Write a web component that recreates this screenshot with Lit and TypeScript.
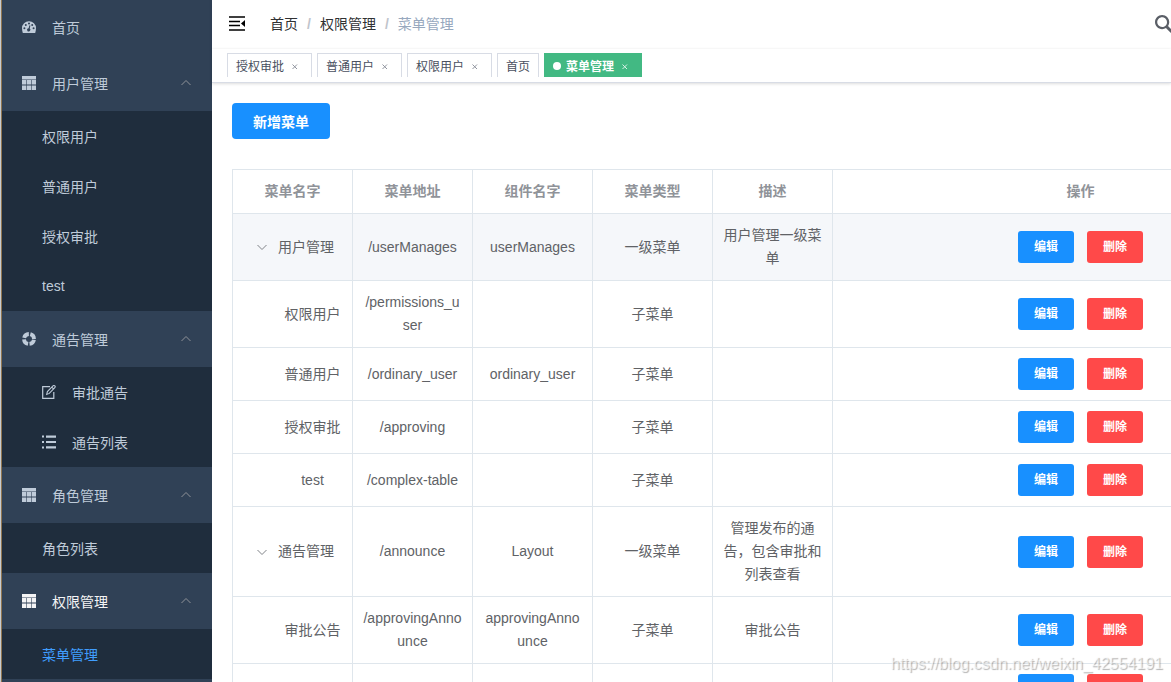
import { LitElement, html, css, svg, nothing } from "lit";
import { customElement, property } from "lit/decorators.js";

interface MenuItem {
  label: string;
  icon?: string;
  current?: boolean;
  children?: MenuItem[];
}

interface MenuRow {
  name: string;
  path?: string;
  component?: string;
  type?: string;
  desc?: string;
  child?: boolean;
  hover?: boolean;
}

const icons: Record<string, unknown> = {
  dashboard: svg`<path fill-rule="evenodd" d="M7 1.3a7 7 0 0 0-7 7c0 1.5.3 3 .8 4.700h12.400c.5-1.700.8-3.200.8-4.700a7 7 0 0 0-7-7zM2.4 7.3a1 1 0 1 1 0 2 1 1 0 0 1 0-2zM3.8 3.9a1 1 0 1 1 0 2 1 1 0 0 1 0-2zM7 2.4a1 1 0 1 1 0 2 1 1 0 0 1 0-2zM10.2 3.9a1 1 0 1 1 0 2 1 1 0 0 1 0-2zM11.6 7.3a1 1 0 1 1 0 2 1 1 0 0 1 0-2zM7.5 5.2l.9.3-.7 3a1.6 1.6 0 1 1-1.1-.3z"/>`,
  table: svg`<path d="M0 0h14v3.400H0zM0 4h4.400v4.600H0zM5 4h4v4.600H5zM9.600 4H14v4.600H9.600zM0 9.400h4.400V14H0zM5 9.400h4V14H5zM9.600 9.400H14V14H9.600z"/>`,
  component: svg`<circle cx="7" cy="7" r="5" fill="none" stroke="currentColor" stroke-width="3.8" stroke-dasharray="6.3 1.554" stroke-dashoffset="-.777"/>`,
  edit: svg`<path d="M8 1.700H.7v11.600h11.100V7" fill="none" stroke="currentColor" stroke-width="1.200"/><path d="M4.700 9.400l.7-2.900L11 .9c.5-.5 1.300-.4 1.800 0 .5.5.5 1.200 0 1.700L7.300 8.400zM9.800 2.200l1.700 1.700" fill="none" stroke="currentColor" stroke-width="1.100"/>`,
  list: svg`<path d="M0 .5h2v2H0zM4 .5h10v2.200H4zM0 6h2v2H0zM4 5.900h10v2.200H4zM0 11.500h2v2H0zM4 11.300h10v2.200H4z"/>`,
};

const menu: MenuItem[] = [
  { label: "首页", icon: "dashboard" },
  {
    label: "用户管理",
    icon: "table",
    children: [{ label: "权限用户" }, { label: "普通用户" }, { label: "授权审批" }, { label: "test" }],
  },
  {
    label: "通告管理",
    icon: "component",
    children: [{ label: "审批通告", icon: "edit" }, { label: "通告列表", icon: "list" }],
  },
  { label: "角色管理", icon: "table", children: [{ label: "角色列表" }] },
  { label: "权限管理", icon: "table", current: true, children: [{ label: "菜单管理", current: true }] },
];

const rows: MenuRow[] = [
  { name: "用户管理", path: "/userManages", component: "userManages", type: "一级菜单", desc: "用户管理一级菜单", hover: true },
  { name: "权限用户", path: "/permissions_user", type: "子菜单", child: true },
  { name: "普通用户", path: "/ordinary_user", component: "ordinary_user", type: "子菜单", child: true },
  { name: "授权审批", path: "/approving", type: "子菜单", child: true },
  { name: "test", path: "/complex-table", type: "子菜单", child: true },
  { name: "通告管理", path: "/announce", component: "Layout", type: "一级菜单", desc: "管理发布的通告，包含审批和列表查看" },
  { name: "审批公告", path: "/approvingAnnounce", component: "approvingAnnounce", type: "子菜单", desc: "审批公告", child: true },
  { name: "", child: true },
];

@customElement("side-menu")
export class SideMenu extends LitElement {
  static styles = css`
    :host {
      display: block;
      flex: none;
      width: 210px;
      background: #304156;
      overflow: hidden;
    }
    .menu {
      margin-top: -1px;
      font-size: 14px;
    }
    .item {
      display: flex;
      align-items: center;
      height: 56px;
      padding: 0 20px;
      box-sizing: border-box;
      color: #bfcbd9;
      text-decoration: none;
    }
    .label {
      flex: 1;
    }
    .icon {
      width: 14px;
      height: 14px;
      margin-right: 16px;
      fill: currentColor;
    }
    .arrow {
      width: 12px;
      height: 12px;
      fill: none;
      stroke: #909399;
    }
    .group.current {
      color: #f4f4f5;
    }
    .sub {
      background: #1f2d3d;
    }
    .sub .item {
      height: 50px;
      padding-left: 40px;
    }
    .sub .current {
      color: #409eff;
    }
  `;

  private link(item: MenuItem) {
    return html`<a
      class="item ${item.children ? "group" : ""} ${item.current ? "current" : ""}"
      href="#"
    >
      ${item.icon
        ? html`<svg class="icon" viewBox="0 0 14 14" aria-hidden="true">${icons[item.icon]}</svg>`
        : nothing}
      <span class="label">${item.label}</span>
      ${item.children
        ? html`<svg class="arrow" viewBox="0 0 12 12" aria-hidden="true"><path d="M1.500 8L6 3.500 10.500 8" /></svg>`
        : nothing}
    </a>`;
  }

  render() {
    return html`<nav class="menu">
      ${menu.map(
        (item) => html`${this.link(item)}
        ${item.children ? html`<div class="sub">${item.children.map((c) => this.link(c))}</div>` : nothing}`
      )}
    </nav>`;
  }
}

@customElement("nav-bar")
export class NavBar extends LitElement {
  static styles = css`
    :host {
      display: flex;
      align-items: center;
      height: 49px;
      padding: 0 0 2px 15px;
      box-sizing: border-box;
      background: #fff;
      box-shadow: 0 1px 4px rgba(0, 21, 41, 0.08);
    }
    button {
      border: 0;
      padding: 0;
      background: none;
      display: flex;
    }
    .toggle {
      width: 20px;
      margin-right: 23px;
    }
    .crumbs {
      flex: 1;
      padding-bottom: 2px;
      font-size: 14px;
      color: #97a8be;
    }
    a {
      color: #303133;
      text-decoration: none;
    }
    .sep {
      margin: 0 9px;
      font-weight: 700;
      color: #c0c4cc;
    }
    .search {
      flex: none;
      color: #5a5e66;
    }
  `;

  render() {
    return html`
      <button class="toggle" aria-label="折叠菜单">
        <svg width="20" height="20" viewBox="0 0 20 20">
          <path d="M2 3h16M2 7.500h11M2 11.500h11M2 16h16" fill="none" stroke="#000" stroke-width="1.600" />
          <path d="M18 6v7L14 9.500z" />
        </svg>
      </button>
      <nav class="crumbs">
        <a href="#">首页</a><span class="sep">/</span><a href="#">权限管理</a><span class="sep">/</span><span>菜单管理</span>
      </nav>
      <button class="search" aria-label="搜索">
        <svg width="18" height="18" viewBox="0 0 128 128" fill="currentColor">
          <path d="M124.884 109.812L94.256 79.166c-.357-.357-.757-.629-1.129-.914a50.366 50.366 0 0 0 8.186-27.590C101.327 22.689 78.656 0 50.670 0 22.685 0 0 22.688 0 50.663c0 27.989 22.685 50.663 50.656 50.663 10.186 0 19.643-3.030 27.600-8.201.286.385.557.771.9 1.114l30.628 30.632a10.633 10.633 0 0 0 7.543 3.129c2.728 0 5.457-1.043 7.543-3.115 4.171-4.157 4.171-10.915.014-15.073M50.671 85.338C31.557 85.338 16 69.780 16 50.663c0-19.102 15.557-34.661 34.670-34.661 19.115 0 34.657 15.559 34.657 34.675 0 19.102-15.557 34.661-34.656 34.661" />
        </svg>
      </button>
    `;
  }
}

@customElement("tags-view")
export class TagsView extends LitElement {
  static styles = css`
    :host {
      display: flex;
      gap: 5px;
      height: 34px;
      padding: 4px 15px 0;
      box-sizing: border-box;
      background: #fff;
      border-bottom: 1px solid #d8dce5;
      box-shadow: 0 1px 3px 0 rgba(0, 0, 0, 0.12), 0 0 3px 0 rgba(0, 0, 0, 0.04);
    }
    .tag {
      display: flex;
      align-items: center;
      height: 24px;
      padding: 0 8px;
      box-sizing: border-box;
      border: 1px solid #d8dce5;
      border-bottom: 0;
      background: #fff;
      color: #495060;
      font-size: 12px;
      text-decoration: none;
    }
    .active {
      background: #42b983;
      border-color: #42b983;
      color: #fff;
      font-weight: 700;
    }
    .dot {
      width: 8px;
      height: 8px;
      margin-right: 5px;
      border-radius: 50%;
      background: #fff;
    }
    .close {
      width: 16px;
      height: 16px;
      margin-left: 3px;
      fill: none;
      stroke: currentColor;
      opacity: 0.6;
    }
    .active .close {
      opacity: 0.8;
    }
  `;

  private tag(label: string, closable = true, active = false) {
    return html`<a class="tag ${active ? "active" : ""}" href="#">
      ${active ? html`<span class="dot"></span>` : nothing}<span>${label}</span>
      ${closable
        ? html`<svg class="close" viewBox="0 0 16 16"><path d="M5.500 6.500l4.500 4.500M10 6.500l-4.500 4.500" /></svg>`
        : nothing}
    </a>`;
  }

  render() {
    return html`${this.tag("授权审批")}${this.tag("普通用户")}${this.tag("权限用户")}${this.tag("首页", false)}${this.tag("菜单管理", true, true)}`;
  }
}

@customElement("menu-table")
export class MenuTable extends LitElement {
  @property({ attribute: false }) rows: MenuRow[] = [];

  static styles = css`
    table {
      width: 100%;
      table-layout: fixed;
      border-collapse: separate;
      border-spacing: 0;
      border: solid #dfe6ec;
      border-width: 1px 0 0 1px;
      font-size: 14px;
      line-height: 23px;
      color: #606266;
    }
    .narrow {
      width: 120px;
    }
    th,
    td {
      padding: 10px;
      border: solid #dfe6ec;
      border-width: 0 1px 1px 0;
      text-align: center;
      word-break: break-all;
    }
    th {
      color: #909399;
      font-weight: 700;
    }
    .hover {
      background: #f5f7fa;
    }
    .name {
      display: flex;
      justify-content: center;
      align-items: center;
    }
    .child {
      padding-left: 40px;
      white-space: nowrap;
    }
    .expand {
      display: flex;
      justify-content: center;
      width: 22px;
      margin-right: 5px;
      padding: 0;
      border: 0;
      background: none;
    }
    .expand svg {
      width: 12px;
      height: 12px;
      fill: none;
      stroke: #808388;
    }
    .actions {
      display: flex;
      justify-content: center;
      gap: 13px;
    }
    .btn {
      width: 56px;
      height: 32px;
      padding: 1px 0 0;
      border: 0;
      border-radius: 3px;
      background: #1890ff;
      color: #fff;
      font: inherit;
      font-size: 12px;
      font-weight: 700;
    }
    .danger {
      background: #ff4949;
    }
  `;

  render() {
    return html`<table>
      <colgroup>
        <col class="narrow" /><col class="narrow" /><col class="narrow" /><col class="narrow" /><col class="narrow" /><col />
      </colgroup>
      <thead>
        <tr>
          ${["菜单名字", "菜单地址", "组件名字", "菜单类型", "描述", "操作"].map((h) => html`<th>${h}</th>`)}
        </tr>
      </thead>
      <tbody>
        ${this.rows.map(
          (r) => html`<tr class=${r.hover ? "hover" : ""}>
            <td>
              <div class="name ${r.child ? "child" : ""}">
                ${r.child
                  ? nothing
                  : html`<button class="expand" aria-label="收起">
                      <svg viewBox="0 0 12 12"><path d="M1.500 4L6 8.500 10.500 4" /></svg>
                    </button>`}
                <span>${r.name}</span>
              </div>
            </td>
            <td>${r.path}</td>
            <td>${r.component}</td>
            <td>${r.type}</td>
            <td>${r.desc}</td>
            <td>
              <div class="actions">
                <button class="btn">编辑</button>
                <button class="btn danger">删除</button>
              </div>
            </td>
          </tr>`
        )}
      </tbody>
    </table>`;
  }
}

@customElement("app-root")
export class AppRoot extends LitElement {
  static styles = css`
    :host {
      display: flex;
      position: relative;
      height: 100vh;
      overflow: hidden;
      background: #fff;
      font-family: "Liberation Sans", "Noto Sans CJK SC", sans-serif;
    }
    .edge {
      flex: none;
      width: 1px;
      background: #c8ccd0;
      border-right: 1px solid #8f7550;
    }
    .main {
      flex: 1;
      min-width: 0;
    }
    .bar {
      margin-right: -2px;
    }
    .content {
      padding: 20px;
    }
    .add {
      display: block;
      height: 36px;
      padding: 0 21px;
      margin-bottom: 30px;
      border: 0;
      border-radius: 4px;
      background: #1890ff;
      color: #fff;
      font: inherit;
      font-size: 14px;
      font-weight: 700;
    }
    .table {
      display: block;
      min-width: 1097px;
    }
    .watermark {
      position: absolute;
      right: 8px;
      bottom: 8px;
      font-size: 16px;
      line-height: 20px;
      color: rgba(255, 255, 255, 0.6);
      text-shadow: 1px 1px 1px rgba(0, 0, 0, 0.3);
      pointer-events: none;
    }
  `;

  render() {
    return html`
      <div class="edge"></div>
      <side-menu></side-menu>
      <main class="main">
        <nav-bar class="bar"></nav-bar>
        <tags-view></tags-view>
        <section class="content">
          <button class="add">新增菜单</button>
          <menu-table class="table" .rows=${rows}></menu-table>
        </section>
      </main>
      <div class="watermark">https://blog.csdn.net/weixin_42554191</div>
    `;
  }
}
